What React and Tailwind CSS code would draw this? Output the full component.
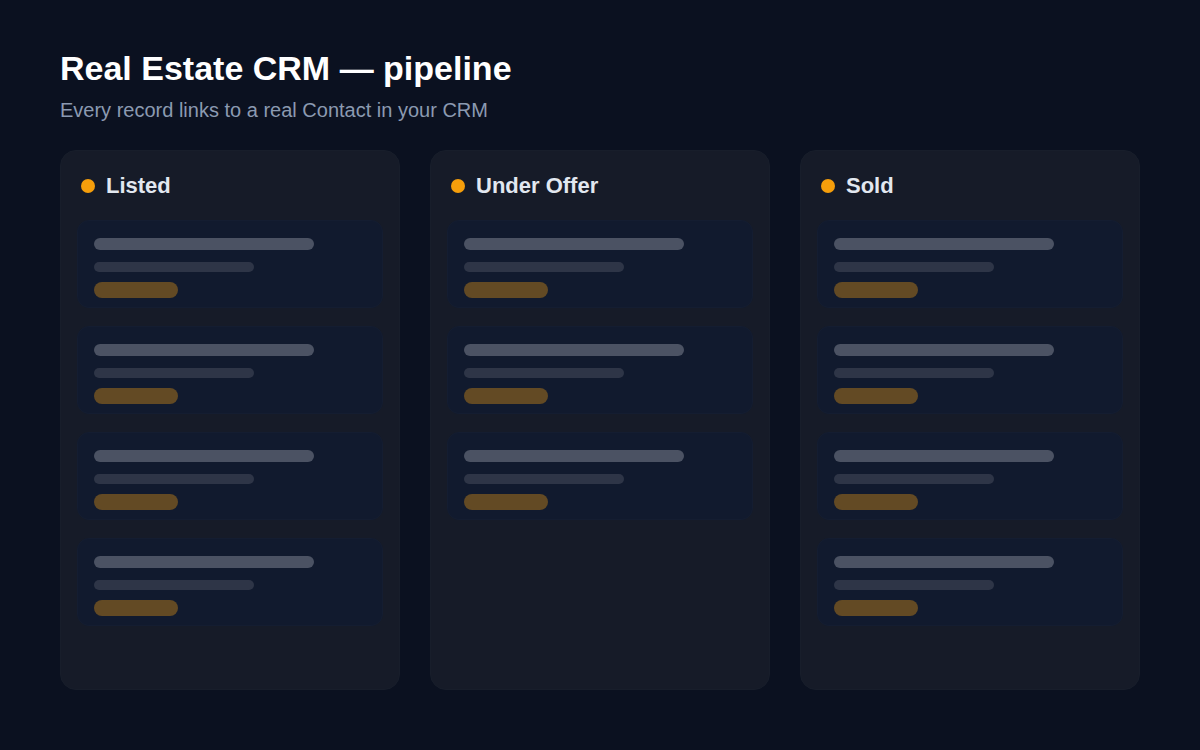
import React from "react";

const columns = [
  { title: "Listed", count: 4 },
  { title: "Under Offer", count: 3 },
  { title: "Sold", count: 4 },
];

function Card() {
  return (
    <div className="h-[88px] rounded-[12px] border border-[#141d31] bg-[#111a2e] px-4 pt-[17px]">
      <div className="h-3 w-[220px] rounded-full bg-[#4b5263]" />
      <div className="mt-3 h-2.5 w-[160px] rounded-full bg-[#2e3547]" />
      <div className="mt-2.5 h-4 w-[84px] rounded-full bg-[#634a24]" />
    </div>
  );
}

function Column({ title, count }) {
  return (
    <div className="h-[540px] rounded-[16px] border border-[#181e2b] bg-[#161b28] px-4 pt-4">
      <div className="flex h-[38px] items-center gap-[11px] pl-1">
        <span className="h-[14px] w-[14px] shrink-0 rounded-full bg-[#f59e0b]" />
        <span className="text-[22px] font-bold leading-7 text-[#e2e8f0]">{title}</span>
      </div>
      <div className="mt-[15px] flex flex-col gap-[18px]">
        {Array.from({ length: count }).map((_, i) => (
          <Card key={i} />
        ))}
      </div>
    </div>
  );
}

export default function App() {
  return (
    <div
      className="min-h-[750px] w-full bg-[#0b1120] px-[60px] pt-12"
      style={{ fontFamily: '"Liberation Sans", Arial, sans-serif' }}
    >
      <h1 className="text-[34px] font-bold leading-10 text-white">Real Estate CRM — pipeline</h1>
      <p className="mt-2 text-[20px] leading-7 text-[#8b9ab1]">
        Every record links to a real Contact in your CRM
      </p>
      <div className="mt-[26px] grid grid-cols-3 gap-[30px]">
        {columns.map((c) => (
          <Column key={c.title} {...c} />
        ))}
      </div>
    </div>
  );
}
